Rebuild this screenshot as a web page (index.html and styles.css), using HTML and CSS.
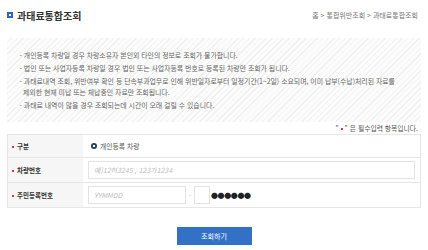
FILE: index.html
```html
<!DOCTYPE html>
<html lang="ko">
<head>
  <meta charset="UTF-8">
  <meta name="viewport" content="width=device-width, initial-scale=1.0">
  <title>과태료통합조회</title>
  <link rel="stylesheet" href="styles.css">
</head>
<body>
  <div class="page">
    <!-- 타이틀 / 위치 -->
    <div class="page-head">
      <h2 class="page-title"><span class="title-icon"></span>과태료통합조회</h2>
      <div class="location">홈 &gt; 통합위반조회 &gt; 과태료통합조회</div>
    </div>

    <!-- 안내문 -->
    <div class="notice">
      <ul>
        <li>- 개인등록 차량일 경우 차량소유자 본인외 타인의 정보로 조회가 불가합니다.</li>
        <li>- 법인 또는 사업자등록 차량일 경우 법인 또는 사업자등록 번호로 등록된 차량만 조회가 됩니다.</li>
        <li>- 과태료내역 조회, 위반여부 확인 등 단속부과업무로 인해 위반일자로부터 일정기간(1~2일) 소요되며, 이미 납부(수납)처리된 자료를<br>제외한 현재 미납 또는 체납중인 자료만 조회됩니다.</li>
        <li>- 과태료 내역이 많을 경우 조회되는데 시간이 오래 걸릴 수 있습니다.</li>
      </ul>
    </div>

    <p class="req-note">" <span class="req-dot"></span> " 은 필수입력 항목입니다.</p>

    <!-- 조회 조건 -->
    <table class="search-table">
      <tr class="row-type">
        <th><span class="req-dot"></span>구분</th>
        <td>
          <label class="radio-label"><span class="radio"></span>개인등록 차량</label>
        </td>
      </tr>
      <tr>
        <th><span class="req-dot"></span>차량번호</th>
        <td><input type="text" class="input-full" placeholder="예)12허3245 , 123가1234"></td>
      </tr>
      <tr>
        <th><span class="req-dot"></span>주민등록번호</th>
        <td>
          <div class="jumin">
            <input type="text" class="input-birth" placeholder="YYMMDD">
            <span class="dash">-</span>
            <input type="text" class="input-one">
            <span class="masked">●●●●●●</span>
          </div>
        </td>
      </tr>
    </table>

    <div class="btn-area">
      <button type="button" class="btn-search">조회하기</button>
    </div>
  </div>
</body>
</html>
```

FILE: styles.css
```css
body {
  margin: 0;
  background: #fff;
  font-family: "Noto Sans CJK KR", "Noto Sans", sans-serif;
  color: #333;
}
.page {
  padding: 0 7px;
}
.page-head {
  display: flex;
  justify-content: space-between;
  align-items: center;
  height: 30px;
}
.page-title {
  margin: 0;
  display: flex;
  align-items: center;
  gap: 4px;
  font-size: 10px;
  font-weight: bold;
  color: #333;
}
.title-icon {
  width: 2px;
  height: 2px;
  border: 2px solid #2a63c0;
  background: #fff;
}
.location {
  margin-right: 3px;
  font-size: 7px;
  color: #777;
}
.notice {
  margin-top: 8px;
  height: 84px;
  box-sizing: border-box;
  padding: 12px 0 0;
  background: repeating-linear-gradient(-45deg, #f1f1f1 0 1px, #fcfcfc 1px 4px);
}
.notice ul {
  margin: 0;
  padding: 0 0 0 16px;
  list-style: none;
}
.notice li {
  margin-bottom: 2px;
  font-size: 6.9px;
  line-height: 11px;
  color: #666;
  text-indent: -3.5px;
}
.req-note {
  margin: 1px 3px 1px 0;
  text-align: right;
  font-size: 6.8px;
  line-height: 10px;
  color: #555;
}
.req-dot {
  display: inline-block;
  width: 2px;
  height: 2px;
  background: #e0303c;
  vertical-align: middle;
}
.search-table {
  width: 100%;
  border-collapse: collapse;
  border: 1px solid #e6e6e6;
}
.search-table th,
.search-table td {
  border-bottom: 1px solid #e6e6e6;
}
.search-table th {
  width: 71px;
  padding: 0 0 0 4px;
  background: #f6f6f6;
  text-align: left;
  font-size: 6.5px;
  font-weight: bold;
  color: #333;
}
.search-table th .req-dot {
  margin-right: 3px;
}
.search-table td {
  height: 18px;
  padding: 3px 5px;
}
.row-type td {
  height: 16px;
  padding-left: 8px;
}
.radio-label {
  display: flex;
  align-items: center;
  gap: 3px;
  font-size: 6.8px;
  color: #555;
}
.radio {
  width: 6px;
  height: 6px;
  border-radius: 50%;
  background: radial-gradient(circle, #fff 0 1px, #203f6c 1.3px);
}
input {
  height: 18px;
  box-sizing: border-box;
  margin: 0;
  padding: 0 5px;
  border: 1px solid #e3e3e3;
  font-family: inherit;
  font-size: 7px;
  display: block;
}
input::placeholder {
  color: #bdbdbd;
  font-style: italic;
}
.input-full {
  width: 100%;
}
.jumin {
  display: flex;
  align-items: center;
}
.input-birth {
  width: 98px;
}
.dash {
  width: 8px;
  text-align: center;
  font-size: 6px;
  color: #aaa;
}
.input-one {
  width: 16px;
}
.masked {
  margin-left: 1px;
  font-size: 7px;
  letter-spacing: -0.4px;
  color: #222;
}
.btn-area {
  margin-top: 19px;
  display: flex;
  justify-content: center;
}
.btn-search {
  display: block;
  width: 75px;
  height: 18px;
  border: none;
  background: #3371c6;
  color: #fff;
  font-family: inherit;
  font-size: 7px;
  cursor: pointer;
}
```
